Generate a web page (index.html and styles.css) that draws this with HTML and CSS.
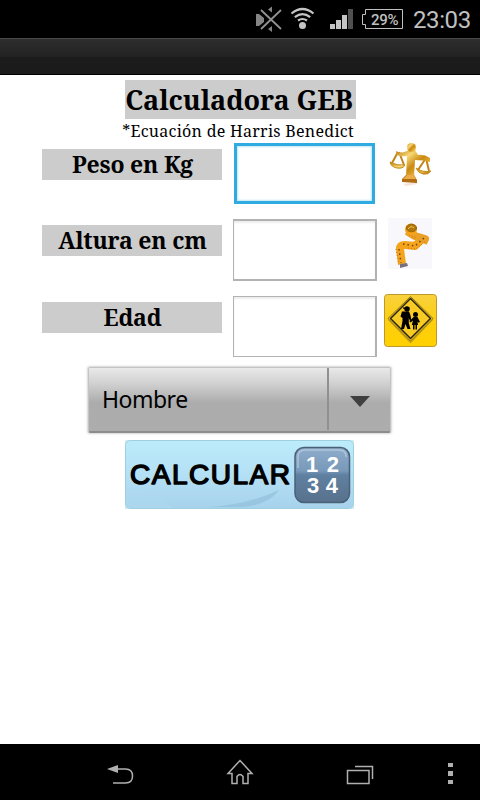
FILE: index.html
```
<!DOCTYPE html>
<html lang="es">
<head>
    <meta charset="utf-8">
    <title>Calculadora GEB</title>
    <link rel="stylesheet" href="styles.css">
</head>
<body>
    <div class="status">
        <svg class="status-icons" width="172" height="38" viewBox="0 0 172 38">
            <g fill="#858585">
                <path d="M4 14h3l5 4v4l-5 4h-3zM16 9.500l4-3v6zM16 29l4 3v-6z"/>
                <path d="M9 10l20 19M29 10L9 29" stroke="#929292" stroke-width="1.8"/>
            </g>
            <g fill="none" stroke="#c5c5c5" stroke-width="2.2">
                <path d="M39.500 13.500Q50.500 4.500 61.500 13.500M42.800 17.200Q50.500 11 58.200 17.200M46 20.500Q50.500 17.500 55 20.500"/>
            </g>
            <circle cx="50.500" cy="25.500" r="3.500" fill="#c5c5c5"/>
            <path d="M78 24h5v5h-5zM84 20h5v9h-5zM90 15h5v14h-5z" fill="#c5c5c5"/>
            <path d="M96 9h5v20h-5z" fill="#505050"/>
            <path d="M113.500 9.500h37v19h-37v-4h-3v-10h3z" fill="none" stroke="#c0c0c0"/>
        </svg>
        <span class="battery">29%</span>
        <span class="clock">23:03</span>
    </div>
    <div class="titlebar"></div>

    <div class="content">
        <h1>Calculadora GEB</h1>
        <p class="note">*Ecuación de Harris Benedict</p>

        <form onsubmit="event.preventDefault();" autocomplete="off">
            <div class="row">
                <label for="peso">Peso en Kg</label>
                <input type="text" id="peso" class="active">
                <svg class="icon" width="53" height="53" viewBox="384 141 53 53">
                    <defs>
                        <linearGradient id="gold" x1="0" y1="0" x2="1" y2="1">
                            <stop offset="0" stop-color="#b87508"/>
                            <stop offset=".3" stop-color="#f8d873"/>
                            <stop offset=".55" stop-color="#c98a12"/>
                            <stop offset=".8" stop-color="#f0bd45"/>
                            <stop offset="1" stop-color="#885000"/>
                        </linearGradient>
                    </defs>
                    <path d="M403 184l12-2 3 2-12 2z" fill="#f6e4d8"/>
                    <path d="M398 152l-6 11M399 152l5 13M426 158l-8 12M426 158l3 13" stroke="#c08418" stroke-width="2" fill="none"/>
                    <path d="M396 151q4 3 11 0l3-2 5 1 3 5q6-1 12 3v4q-7-2-15-2l-1 17h-8l1-21q-6 1-10-1z" fill="url(#gold)"/>
                    <circle cx="411.500" cy="147.500" r="4.500" fill="url(#gold)"/>
                    <path d="M406 175h8l3 5v3l-15-1v-3z" fill="#b16b10"/>
                    <path d="M403 179l4-4h7l2 4z" fill="#ecac48"/>
                    <path d="M390 162q7 4 15 3-2 4-8 3-6-1-7-6zM416 168q7 5 15 3-3 4-8 3-5-1-7-6z" fill="url(#gold)" stroke="#c58a18"/>
                </svg>
            </div>
            <div class="row">
                <label for="altura">Altura en cm</label>
                <input type="text" id="altura">
                <svg class="icon" width="53" height="53" viewBox="384 217 53 53">
                    <path d="M388 218h44v51h-44z" fill="#f8f7fc"/>
                    <g fill="none" stroke-linejoin="round">
                        <path d="M402 264l-2-15q0-4 5-4l10 1 7-7" stroke="#f4a51d" stroke-width="8"/>
                        <path d="M407 231l8 5 10 3-2 4" stroke="#eaa027" stroke-width="8"/>
                        <path d="M399 249l2 14M403 244l12 2 9-8" stroke="#754508" stroke-width="1.500" stroke-dasharray="1.500 3"/>
                        <path d="M396 249l3 16M408 248l8 1 10-8M409 235l7 3" stroke="#c57008" stroke-dasharray="1 2"/>
                    </g>
                    <circle cx="411" cy="229.500" r="6" fill="#f5a41a"/>
                    <ellipse cx="411.500" cy="228" rx="5" ry="3.800" fill="#b1760c" stroke="#9b640b"/>
                    <path d="M408 229q3-4 6-1" fill="none" stroke="#f4ca5b"/>
                    <path d="M400 264l7-1 1 3-8 2z" fill="#77717d"/>
                </svg>
            </div>
            <div class="row">
                <label for="edad">Edad</label>
                <input type="text" id="edad" class="last">
                <svg class="icon" width="53" height="53" viewBox="0 0 53 53">
                    <defs>
                        <linearGradient id="yellow" x1="0" y1="0" x2="0" y2="1">
                            <stop offset="0" stop-color="#f8d13f"/>
                            <stop offset=".45" stop-color="#fccf12"/>
                            <stop offset="1" stop-color="#ffd000"/>
                        </linearGradient>
                    </defs>
                    <rect x=".5" y=".5" width="52" height="52" rx="3" fill="url(#yellow)" stroke="#bd982a"/>
                    <path d="M26.500 5L49 26 26.500 49.500 4 26z" fill="#a48419" opacity=".6"/>
                    <path d="M26.500 2.500L49 24.500 26.500 47 4 24.500z" fill="#fbd32c" stroke="#8a7119" stroke-linejoin="round"/>
                    <path d="M26.500 4.500L46.500 24.500 26.500 44.500 6.500 24.500z" fill="#f7ca24" stroke="#292207" stroke-width="1.500" stroke-linejoin="round"/>
                    <circle cx="23" cy="15" r="2.700"/>
                    <path d="M19 13.500h6.500v1.200H19zM21 17.500h4l1.500 4 1 5-1.500.5-1.200-3v5l1.700 6h-3l-2-5-1.500 5h-3l1.500-8v-3l-2-1.500 1.500-5z"/>
                    <circle cx="31.500" cy="20.500" r="2.500"/>
                    <path d="M29.500 23h4l2.500 5-1.500.7-1-1.500.5 3.800h-1v4.500h-1.500V31h-1v4.500H29V31h-1.200l1.200-4.500-2.500 2-1-1z"/>
                </svg>
            </div>

            <div class="spinner">
                <span>Hombre</span>
                <i></i>
            </div>

            <button type="submit">
                <svg width="229" height="69" viewBox="0 0 229 69">
                    <defs>
                        <linearGradient id="sky" x1="0" y1="0" x2="0" y2="1">
                            <stop offset="0" stop-color="#bcecfb"/>
                            <stop offset=".5" stop-color="#b4e0f5"/>
                            <stop offset="1" stop-color="#a7d2ec"/>
                        </linearGradient>
                        <linearGradient id="key" x1="0" y1="0" x2="0" y2="1">
                            <stop offset="0" stop-color="#8faccb"/>
                            <stop offset=".42" stop-color="#7899b9"/>
                            <stop offset=".5" stop-color="#6080a1"/>
                            <stop offset="1" stop-color="#58718c"/>
                        </linearGradient>
                    </defs>
                    <rect width="229" height="69" fill="#d4e8ef"/>
                    <rect x=".5" y=".5" width="228" height="68" rx="5" fill="url(#sky)" stroke="#9fd0e0"/>
                    <path d="M84 67q38-2 70-17-10 15-38 17z" fill="#8ebdd7" opacity=".6"/>
                    <path d="M29 50q8 10 19 18H1V48q10 6 28 2z" fill="#add9ef" opacity=".6"/>
                    <text class="calc" x="5" y="44" textLength="160">CALCULAR</text>
                    <rect x="170" y="7.500" width="54.500" height="55" rx="9" fill="url(#key)" stroke="#486078" stroke-width="1.500"/>
                    <path d="M173 28V17q0-7 7-7h34q7 0 7 7" fill="none" stroke="#bed1e3" stroke-width="1.500" opacity=".7"/>
                    <g class="digits">
                        <text x="181" y="32" textLength="33">12</text>
                        <text x="182" y="53" textLength="31">34</text>
                    </g>
                </svg>
            </button>
        </form>
    </div>

    <div class="nav">
        <svg width="480" height="56" viewBox="0 0 480 56" fill="none" stroke="#b0b0b0" stroke-width="1.500">
            <path d="M117 25h8.500q7 0 7 7t-7 7H113"/>
            <path d="M107 25l11-4v8z" fill="#b0b0b0" stroke="none"/>
            <path d="M228 29.500L240 16.500l12 13h-4v10h-5v-7q-3-4-6 0v7h-5v-10z"/>
            <path d="M347.500 26.500h21.500v13h-21.500zM355 22.500h17.500V35"/>
            <path d="M448 19h5v4h-5zM448 27h5v5h-5zM448 36h5v4h-5z" fill="#b0b0b0" stroke="none"/>
        </svg>
    </div>
</body>
</html>
```
FILE: styles.css
```
body {
    margin: 0;
    width: 480px;
    height: 800px;
    display: flex;
    flex-direction: column;
    overflow: hidden;
    background: #fff;
    color: #000;
    font-family: "Droid Serif", "Noto Serif", "DejaVu Serif Condensed", "DejaVu Serif", serif;
}
.status {
    position: relative;
    height: 38px;
    background: #000;
    color: #c0c0c0;
    font-family: Roboto, sans-serif;
}
.status-icons {
    display: block;
    margin-left: 252px;
}
.battery {
    position: absolute;
    left: 371px;
    top: 10px;
    font-size: 15px;
    line-height: 20px;
    font-weight: 500;
    letter-spacing: -0.3px;
}
.clock {
    position: absolute;
    left: 413px;
    top: 5px;
    font-size: 24px;
    line-height: 30px;
    letter-spacing: -0.4px;
}
.titlebar {
    box-sizing: border-box;
    height: 37px;
    border-top: 1px solid #484848;
    border-bottom: 1px solid #000;
    background: linear-gradient(#2e2e2e, #222 18px, #1c1c1c 18px, #1b1b1b);
}
.content {
    flex: 1;
    display: flex;
    flex-direction: column;
    align-items: center;
}
h1 {
    box-sizing: border-box;
    margin: 5px 0 0;
    padding-right: 2px;
    width: 231px;
    height: 39px;
    line-height: 40px;
    background: #ccc;
    font-size: 27px;
    letter-spacing: -0.1px;
    text-align: center;
    white-space: nowrap;
}
.note {
    margin: 1px 4px 0 0;
    height: 23px;
    line-height: 23px;
    font-size: 16px;
    letter-spacing: 0.28px;
    white-space: nowrap;
}
form {
    display: flex;
    flex-direction: column;
    align-items: center;
}
.row {
    width: 396px;
    height: 76.4px;
    display: grid;
    grid-template-columns: 180px 144px 53px;
    column-gap: 11px;
    align-items: start;
}
.row label {
    margin-top: 6px;
    height: 31px;
    line-height: 31px;
    padding-left: 1px;
    background: #ccc;
    font-size: 23px;
    letter-spacing: -0.2px;
    font-weight: bold;
    text-align: center;
}
.row input {
    box-sizing: border-box;
    width: 144px;
    height: 62px;
    border: 2px solid #b2b2b2;
    border-left-width: 1px;
    background: #fff;
    box-shadow: inset 0 2px 2px #eee;
    outline: none;
}
.row input.active {
    width: 141px;
    height: 61px;
    margin-left: 1px;
    border: 3px solid #2fabe1;
    box-shadow: inset 0 0 2px 1px #bfe5f5;
}
.row input.last {
    height: 61px;
    border-top-width: 1px;
    border-bottom-width: 1px;
}
.icon {
    margin: -2px 0 0 -4px;
}
.spinner {
    box-sizing: border-box;
    width: 303px;
    height: 66px;
    margin: -5px 1px 0 0;
    padding: 0 0 1px 13px;
    display: flex;
    align-items: center;
    justify-content: space-between;
    border: 1px solid #c3c3c3;
    border-bottom: 2px solid #8d8d8d;
    border-radius: 2px;
    background: linear-gradient(#e9e9e9, #d0d0d0 25%, #acacac 55%, #adadad);
    box-shadow: 0 0 2px 1px #d5d5d5;
    font-family: "Noto Sans", "Open Sans", sans-serif;
    font-size: 23px;
    letter-spacing: -0.5px;
}
.spinner i {
    width: 61px;
    height: 100%;
    display: flex;
    align-items: center;
    justify-content: center;
    border-left: 2px solid #909090;
}
.spinner i::after {
    content: "";
    margin-top: 4px;
    border: 10px solid transparent;
    border-top: 11px solid #404040;
    border-bottom: 0;
}
button {
    margin: 7px 2px 0 0;
    padding: 0;
    border: 0;
    background: none;
}
button svg {
    display: block;
}
.calc {
    font: 28px "Liberation Sans", sans-serif;
    stroke: #000;
    stroke-width: 1.5px;
    stroke-linejoin: round;
}
.digits {
    fill: #fff;
    font: bold 22px "Liberation Sans", sans-serif;
}
.nav {
    height: 56px;
    background: #000;
}
.nav svg {
    display: block;
}
```
